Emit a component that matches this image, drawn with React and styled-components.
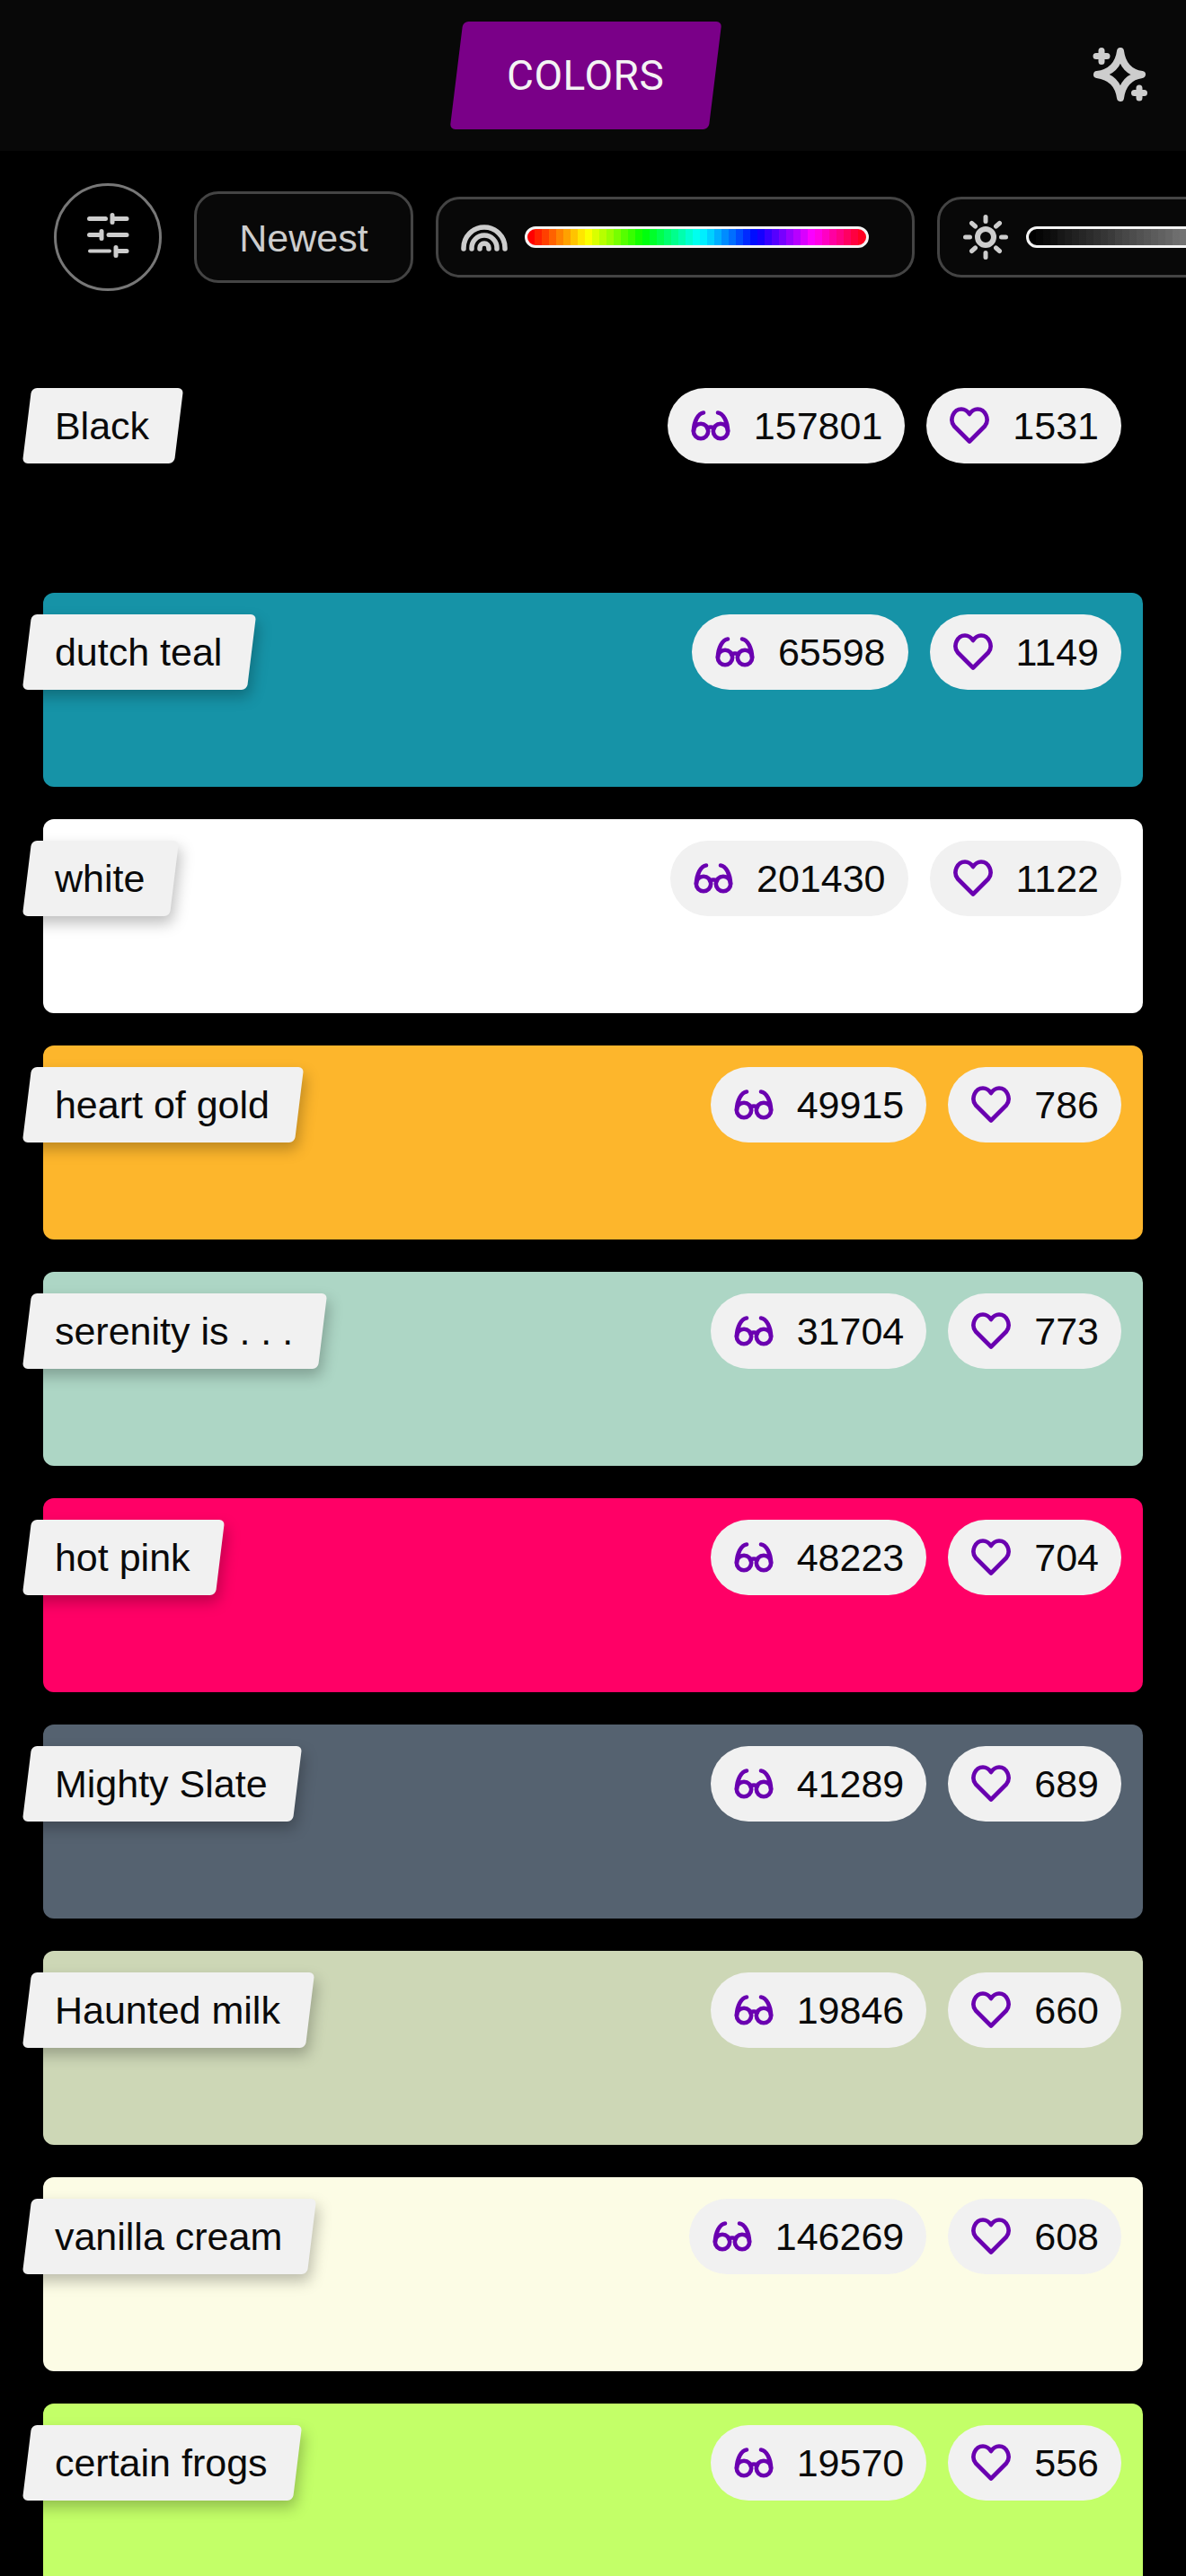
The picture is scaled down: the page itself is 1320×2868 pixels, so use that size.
import React from "react";
import styled, { createGlobalStyle } from "styled-components";

const colors = [
  { name: "Black", hex: "#000000", views: 157801, likes: 1531 },
  { name: "dutch teal", hex: "#1693a7", views: 65598, likes: 1149 },
  { name: "white", hex: "#ffffff", views: 201430, likes: 1122 },
  { name: "heart of gold", hex: "#fdb62c", views: 49915, likes: 786 },
  { name: "serenity is . . .", hex: "#add6c5", views: 31704, likes: 773 },
  { name: "hot pink", hex: "#ff0066", views: 48223, likes: 704 },
  { name: "Mighty Slate", hex: "#556270", views: 41289, likes: 689 },
  { name: "Haunted milk", hex: "#cdd7b6", views: 19846, likes: 660 },
  { name: "vanilla cream", hex: "#fcfce5", views: 146269, likes: 608 },
  { name: "certain frogs", hex: "#c3ff68", views: 19570, likes: 556 },
];

// the sliders are drawn in 8px bands, like the original
function bands(count, colorAt) {
  const stops = [];
  for (let i = 0; i < count; i++) {
    const c = colorAt(i / (count - 1));
    stops.push(`${c} ${i * 8}px ${(i + 1) * 8}px`);
  }
  return `linear-gradient(to right, ${stops.join(", ")})`;
}
const hueBands = bands(48, (t) => `hsl(${Math.round(t * 360)}, 100%, 50%)`);
const lightBands = bands(48, (t) => `hsl(0, 0%, ${Math.round(t * 100)}%)`);

const GlobalStyle = createGlobalStyle`
  html, body {
    margin: 0;
    padding: 0;
    background: #000;
    overflow: hidden;
  }
  * {
    box-sizing: border-box;
  }
`;

const Page = styled.div`
  width: 1320px;
  height: 2868px;
  overflow: hidden;
  background: #000;
  font-family: "Liberation Sans", Arial, sans-serif;
`;

const Header = styled.header`
  height: 168px;
  padding: 0 42px 0 25px;
  display: grid;
  grid-template-columns: 1fr auto 1fr;
  align-items: center;
  background: #080808;
`;

const Tab = styled.div`
  grid-column: 2;
  width: 288px;
  height: 120px;
  display: flex;
  align-items: center;
  justify-content: center;
  border-radius: 6px;
  background: #7a0088;
  transform: skewX(-7deg);
`;

const TabText = styled.span`
  font-family: Roboto, sans-serif;
  font-size: 46px;
  font-weight: 400;
  letter-spacing: 0.5px;
  color: #f4f4f4;
  transform: skewX(7deg);
`;

const SparkleIcon = styled.svg`
  justify-self: end;
  display: block;
`;

const FilterBar = styled.div`
  height: 240px;
  padding: 36px 0 0 60px;
  display: flex;
  align-items: flex-start;
  gap: 25px;
  overflow: hidden;
`;

const RoundButton = styled.div`
  flex: none;
  width: 120px;
  height: 120px;
  margin-right: 11px;
  display: flex;
  align-items: center;
  justify-content: center;
  border: 3px solid #777;
  border-radius: 50%;
`;

const SortButton = styled.div`
  flex: none;
  width: 244px;
  height: 102px;
  margin-top: 9px;
  padding-top: 3px;
  display: flex;
  align-items: center;
  justify-content: center;
  border: 3px solid #444;
  border-radius: 27px;
  background: #080808;
  color: #cdcdcd;
  font-size: 43px;
`;

const SliderBox = styled.div`
  flex: none;
  width: 533px;
  height: 90px;
  margin-top: 15px;
  padding: 0 47px 0 24px;
  display: flex;
  align-items: center;
  gap: 18px;
  border: 3px solid #444;
  border-radius: 27px;
  background: #080808;
`;

const Track = styled.div`
  flex: none;
  width: 383px;
  height: 24px;
  border: 3px solid #f4f4f4;
  border-radius: 12px;
`;

const List = styled.main`
  padding: 0 48px;
  display: flex;
  flex-direction: column;
  gap: 36px;
`;

const Row = styled.article`
  flex: none;
  height: 216px;
  padding: 24px 24px 0 0;
  display: flex;
  align-items: flex-start;
  justify-content: space-between;
  border-radius: 12px;
  background: ${(p) => p.$bg};
`;

const Label = styled.div`
  height: 84px;
  margin-left: -18px;
  padding: 0 33px 0 31px;
  display: flex;
  align-items: center;
  border-radius: 6px;
  background: #f1f1f1;
  box-shadow: 4px 8px 16px rgba(0, 0, 0, 0.25);
  transform: skewX(-7deg);
`;

const LabelText = styled.span`
  font-size: 43px;
  color: #0a0a0a;
  white-space: nowrap;
  transform: skewX(7deg);
`;

const Stats = styled.div`
  display: flex;
  gap: 24px;
`;

const Pill = styled.div`
  height: 84px;
  padding: 0 25px 0 24px;
  display: flex;
  align-items: center;
  gap: 24px;
  border-radius: 42px;
  background: #f1f1f1;
  color: #0a0a0a;
  font-size: 43px;
`;

const PillIcon = styled.svg`
  flex: none;
  display: block;
  fill: none;
  stroke: #6a00b0;
  stroke-width: 4.6;
  stroke-linecap: round;
  stroke-linejoin: round;
`;

const BarIcon = styled.svg`
  flex: none;
  display: block;
  fill: none;
  stroke: #cdcdcd;
  stroke-linecap: round;
  stroke-linejoin: round;
`;

function Sparkle() {
  return (
    <SparkleIcon width="72" height="72" viewBox="0 0 72 72" fill="none" stroke="#cdcdcd" strokeLinecap="round" strokeLinejoin="round">
      <path strokeWidth="8" d="M41 9Q44 32 65 35Q44 38 41 61Q38 38 15 35Q38 32 41 9Z" />
      <path strokeWidth="7" d="M20 8.500v12M14 14.500h12M62 50v11M56.500 55.500h11" />
    </SparkleIcon>
  );
}

function TuneGlyph() {
  return (
    <BarIcon width="60" height="60" viewBox="0 0 60 60" strokeWidth="5">
      <path d="M9.500 9.500h18M38 9.500h13M35 5.500v8" />
      <path d="M9.500 27.500h11M31 27.500h20M23 23.500v8" />
      <path strokeWidth="4" d="M10 45.500h22" />
      <path d="M42 45.500h9M39 41.500v9" />
    </BarIcon>
  );
}

function RainbowGlyph() {
  return (
    <BarIcon width="54" height="54" viewBox="0 0 54 54" strokeWidth="5.500">
      <path d="M4 40v-1a23 23 0 0 1 46 0v1" />
      <path d="M13 40v-1a14 14 0 0 1 28 0v1" />
      <path d="M22 40v-1a5 5 0 0 1 10 0v1" />
    </BarIcon>
  );
}

function SunGlyph() {
  return (
    <BarIcon width="54" height="54" viewBox="0 0 54 54" strokeWidth="5">
      <circle cx="27" cy="27" r="9" strokeWidth="6" />
      <path d="M27 4.500v5M27 44.500v5M4.500 27h5M44.500 27h5M11.500 11.500l4 3.500M42.500 11.500l-4 3.500M11.500 42.500l4-3.500M42.500 42.500l-4-3.500" />
    </BarIcon>
  );
}

function GlassesIcon() {
  return (
    <PillIcon width="48" height="48" viewBox="0 0 48 48">
      <circle cx="13" cy="30" r="8.200" />
      <circle cx="35" cy="30" r="8.200" />
      <path d="M20 26.500Q24 24.500 28 26.500" />
      <path d="M5 30C5 20 10 10 16 9.500" />
      <path d="M43 30C43 20 38 10 32 9.500" />
    </PillIcon>
  );
}

function HeartIcon() {
  return (
    <PillIcon width="48" height="48" viewBox="0 0 48 48">
      <path d="M24 41.500L7 24.500C1 17 6.500 5.500 15 5.500C19 5.500 22 8 24 11C26 8 29 5.500 33 5.500C41.500 5.500 47 17 41 24.500Z" />
    </PillIcon>
  );
}

function ColorRow({ item }) {
  return (
    <Row $bg={item.hex}>
      <Label>
        <LabelText>{item.name}</LabelText>
      </Label>
      <Stats>
        <Pill>
          <GlassesIcon />
          {item.views}
        </Pill>
        <Pill>
          <HeartIcon />
          {item.likes}
        </Pill>
      </Stats>
    </Row>
  );
}

export default function App() {
  return (
    <Page>
      <GlobalStyle />
      <Header>
        <Tab>
          <TabText>COLORS</TabText>
        </Tab>
        <Sparkle />
      </Header>
      <FilterBar>
        <RoundButton>
          <TuneGlyph />
        </RoundButton>
        <SortButton>Newest</SortButton>
        <SliderBox>
          <RainbowGlyph />
          <Track style={{ background: hueBands }} />
        </SliderBox>
        <SliderBox>
          <SunGlyph />
          <Track style={{ background: lightBands }} />
        </SliderBox>
      </FilterBar>
      <List>
        {colors.map((item) => (
          <ColorRow key={item.name} item={item} />
        ))}
      </List>
    </Page>
  );
}
